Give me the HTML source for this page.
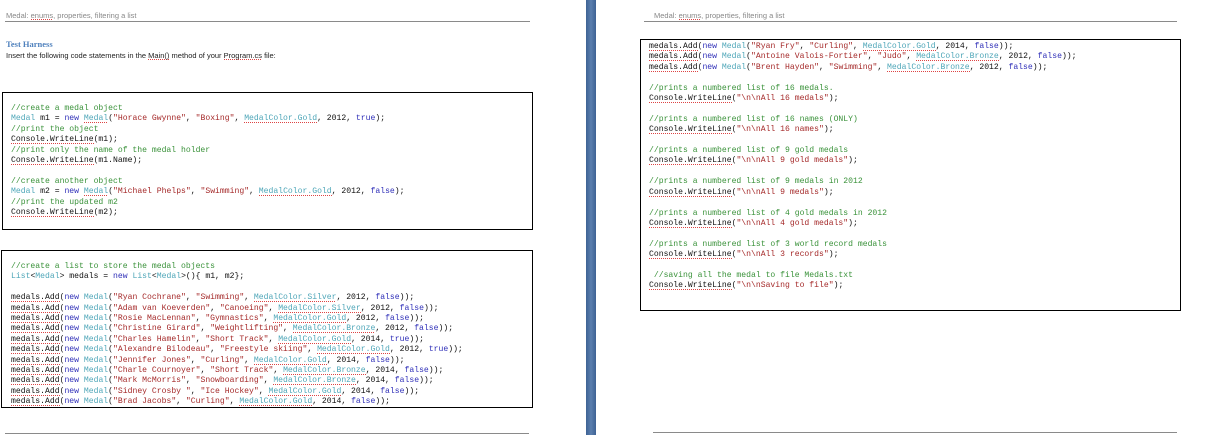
<!DOCTYPE html>
<html><head><meta charset="utf-8"><style>
body{margin:0;width:1205px;height:435px;background:#fff;position:relative;overflow:hidden;font-family:"Liberation Sans",sans-serif}
.hdr{position:absolute;font-size:7.5px;color:#888}
.ln{position:absolute;height:1px;background:#8a8a8a}
.box{position:absolute;border:1.5px solid #000;box-sizing:border-box}
pre{margin:0;position:absolute;font-family:"Liberation Mono",monospace;font-size:8.1px;line-height:10.4px;color:#111}
.c{color:#3a923a}.t{color:#4ea6b8}.k{color:#2f2fb8}.s{color:#a52a2a}
.w{background:repeating-linear-gradient(90deg,#d44 0 1px,transparent 1px 2px) left bottom/100% 1px no-repeat}
</style></head><body>
<div class="hdr" style="left:6px;top:11px">Medal: <span class="w">enums</span>, properties, filtering a list</div>
<div class="ln" style="left:5px;top:21px;width:525px"></div>
<div style="position:absolute;left:6px;top:39px;font-family:'Liberation Serif',serif;font-weight:bold;font-size:8.5px;color:#4f81bd">Test Harness</div>
<div style="position:absolute;left:6px;top:51px;font-size:7.5px;color:#222">Insert the following code statements in the <span class="w">Main()</span> method of your <span class="w">Program.cs</span> file:</div>
<div class="box" style="left:2px;top:92px;width:531px;height:138px"></div>
<pre style="left:11px;top:104px"><span class="c">//create a medal object</span>
<span class="t">Medal</span> m1 = <span class="k">new</span> <span class="t w">Medal</span>(<span class="s">"Horace Gwynne"</span>, <span class="s">"Boxing"</span>, <span class="t w">MedalColor.Gold</span>, 2012, <span class="k">true</span>);
<span class="c">//print the object</span>
<span class="w">Console.WriteLine</span>(m1);
<span class="c">//print only the name of the medal holder</span>
<span class="w">Console.WriteLine</span>(m1.Name);

<span class="c">//create another object</span>
<span class="t">Medal</span> m2 = <span class="k">new</span> <span class="t w">Medal</span>(<span class="s">"Michael Phelps"</span>, <span class="s">"Swimming"</span>, <span class="t w">MedalColor.Gold</span>, 2012, <span class="k">false</span>);
<span class="c">//print the updated m2</span>
<span class="w">Console.WriteLine</span>(m2);</pre>
<div class="box" style="left:1px;top:250px;width:532px;height:158px"></div>
<pre style="left:11px;top:262px"><span class="c">//create a list to store the medal objects</span>
<span class="t">List</span>&lt;<span class="t">Medal</span>&gt; medals = <span class="k">new</span> <span class="t">List</span>&lt;<span class="t">Medal</span>&gt;(){ m1, m2};

<span class="w">medals.Add</span>(<span class="k">new</span> <span class="t">Medal</span>(<span class="s">"Ryan Cochrane"</span>, <span class="s">"Swimming"</span>, <span class="t w">MedalColor.Silver</span>, 2012, <span class="k">false</span>));
<span class="w">medals.Add</span>(<span class="k">new</span> <span class="t">Medal</span>(<span class="s">"Adam van Koeverden"</span>, <span class="s">"Canoeing"</span>, <span class="t w">MedalColor.Silver</span>, 2012, <span class="k">false</span>));
<span class="w">medals.Add</span>(<span class="k">new</span> <span class="t">Medal</span>(<span class="s">"Rosie MacLennan"</span>, <span class="s">"Gymnastics"</span>, <span class="t w">MedalColor.Gold</span>, 2012, <span class="k">false</span>));
<span class="w">medals.Add</span>(<span class="k">new</span> <span class="t">Medal</span>(<span class="s">"Christine Girard"</span>, <span class="s">"Weightlifting"</span>, <span class="t w">MedalColor.Bronze</span>, 2012, <span class="k">false</span>));
<span class="w">medals.Add</span>(<span class="k">new</span> <span class="t">Medal</span>(<span class="s">"Charles Hamelin"</span>, <span class="s">"Short Track"</span>, <span class="t w">MedalColor.Gold</span>, 2014, <span class="k">true</span>));
<span class="w">medals.Add</span>(<span class="k">new</span> <span class="t">Medal</span>(<span class="s">"Alexandre Bilodeau"</span>, <span class="s">"Freestyle skiing"</span>, <span class="t w">MedalColor.Gold</span>, 2012, <span class="k">true</span>));
<span class="w">medals.Add</span>(<span class="k">new</span> <span class="t">Medal</span>(<span class="s">"Jennifer Jones"</span>, <span class="s">"Curling"</span>, <span class="t w">MedalColor.Gold</span>, 2014, <span class="k">false</span>));
<span class="w">medals.Add</span>(<span class="k">new</span> <span class="t">Medal</span>(<span class="s">"Charle Cournoyer"</span>, <span class="s">"Short Track"</span>, <span class="t w">MedalColor.Bronze</span>, 2014, <span class="k">false</span>));
<span class="w">medals.Add</span>(<span class="k">new</span> <span class="t">Medal</span>(<span class="s">"Mark McMorris"</span>, <span class="s">"Snowboarding"</span>, <span class="t w">MedalColor.Bronze</span>, 2014, <span class="k">false</span>));
<span class="w">medals.Add</span>(<span class="k">new</span> <span class="t">Medal</span>(<span class="s">"Sidney Crosby "</span>, <span class="s">"Ice Hockey"</span>, <span class="t w">MedalColor.Gold</span>, 2014, <span class="k">false</span>));
<span class="w">medals.Add</span>(<span class="k">new</span> <span class="t">Medal</span>(<span class="s">"Brad Jacobs"</span>, <span class="s">"Curling"</span>, <span class="t w">MedalColor.Gold</span>, 2014, <span class="k">false</span>));</pre>
<div class="ln" style="left:5px;top:433px;width:524px"></div>
<div style="position:absolute;left:586px;top:0;width:10px;height:435px;background:linear-gradient(90deg,#3e6294,#5b7fae,#3e6294)"></div>
<div class="hdr" style="left:654px;top:11px">Medal: <span class="w">enums</span>, properties, filtering a list</div>
<div class="ln" style="left:644px;top:21px;width:533px"></div>
<div class="box" style="left:640px;top:39px;width:541px;height:272px"></div>
<pre style="left:649px;top:42px"><span class="w">medals.Add</span>(<span class="k">new</span> <span class="t">Medal</span>(<span class="s">"Ryan Fry"</span>, <span class="s">"Curling"</span>, <span class="t w">MedalColor.Gold</span>, 2014, <span class="k">false</span>));
<span class="w">medals.Add</span>(<span class="k">new</span> <span class="t">Medal</span>(<span class="s">"Antoine Valois-Fortier"</span>, <span class="s">"Judo"</span>, <span class="t w">MedalColor.Bronze</span>, 2012, <span class="k">false</span>));
<span class="w">medals.Add</span>(<span class="k">new</span> <span class="t">Medal</span>(<span class="s">"Brent Hayden"</span>, <span class="s">"Swimming"</span>, <span class="t w">MedalColor.Bronze</span>, 2012, <span class="k">false</span>));

<span class="c">//prints a numbered list of 16 medals.</span>
<span class="w">Console.WriteLine</span>(<span class="s">"\n\nAll 16 medals"</span>);

<span class="c">//prints a numbered list of 16 names (ONLY)</span>
<span class="w">Console.WriteLine</span>(<span class="s">"\n\nAll 16 names"</span>);

<span class="c">//prints a numbered list of 9 gold medals</span>
<span class="w">Console.WriteLine</span>(<span class="s">"\n\nAll 9 gold medals"</span>);

<span class="c">//prints a numbered list of 9 medals in 2012</span>
<span class="w">Console.WriteLine</span>(<span class="s">"\n\nAll 9 medals"</span>);

<span class="c">//prints a numbered list of 4 gold medals in 2012</span>
<span class="w">Console.WriteLine</span>(<span class="s">"\n\nAll 4 gold medals"</span>);

<span class="c">//prints a numbered list of 3 world record medals</span>
<span class="w">Console.WriteLine</span>(<span class="s">"\n\nAll 3 records"</span>);

<span class="c"> //saving all the medal to file Medals.txt</span>
<span class="w">Console.WriteLine</span>(<span class="s">"\n\nSaving to file"</span>);</pre>
<div class="ln" style="left:653px;top:432px;width:524px"></div>
</body></html>
